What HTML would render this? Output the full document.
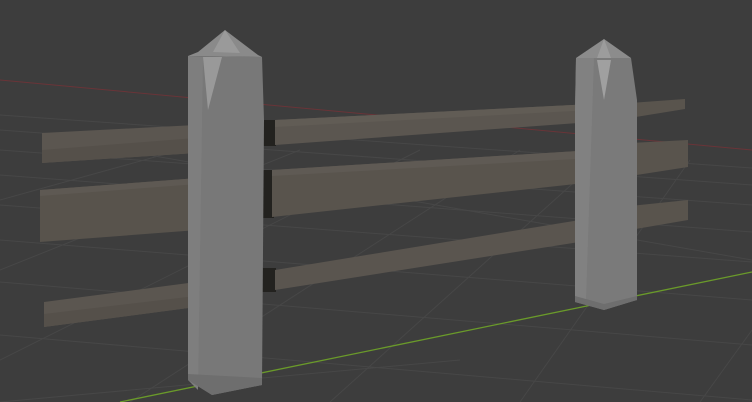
<!DOCTYPE html>
<html><head><style>html,body{margin:0;padding:0;background:#3d3d3d;width:752px;height:402px;overflow:hidden}</style></head>
<body>
<svg width="752" height="402" viewBox="0 0 752 402" xmlns="http://www.w3.org/2000/svg">
<rect width="752" height="402" fill="#3d3d3d"/>
<g stroke="#474747" stroke-width="1" fill="none">
<path d="M0 150 L752 205"/><path d="M0 175 L752 232"/><path d="M0 205 L752 262"/><path d="M0 240 L752 300"/><path d="M0 282 L752 345"/><path d="M0 335 L752 400"/>
<path d="M0 130 L752 185"/><path d="M0 115 L752 168"/>
<path d="M0 270 L300 150"/><path d="M0 360 L420 150"/><path d="M130 402 L520 150"/><path d="M330 402 L610 150"/><path d="M520 402 L690 160"/><path d="M700 402 L752 330"/>
<path d="M0 200 L180 150"/><path d="M0 402 L460 360"/><path d="M120 150 L752 260"/>
</g>
<path d="M0 80 L752 150" stroke="#6a3438" stroke-width="1"/>
<path d="M120 402 L752 272" stroke="#6a9a2a" stroke-width="1.3"/>
<!-- left rails -->
<polygon points="42,133 196,125 196,153 42,163" fill="#5b5650"/>
<polygon points="42,150 196,138 196,153 42,163" fill="#55504a"/>
<polygon points="40,190 198,178 198,230 40,242" fill="#58534c"/>
<polygon points="40,190 198,178 198,184 40,196" fill="#5e5953"/>
<polygon points="44,302 196,282 196,307 44,327" fill="#5b5650"/>
<polygon points="44,314 196,296 196,307 44,327" fill="#55504a"/>
<!-- gaps -->
<rect x="262" y="120" width="14" height="26" fill="#23221f"/>
<rect x="262" y="170" width="12" height="48" fill="#23221f"/>
<rect x="262" y="268" width="14" height="24" fill="#23221f"/>
<!-- middle rails -->
<polygon points="275,120 592,104 592,122 275,145" fill="#5b5650"/>
<polygon points="275,120 592,104 592,110 275,127" fill="#615c55"/>
<polygon points="272,170 594,150 594,182 272,217" fill="#59544d"/>
<polygon points="272,170 594,150 594,158 272,176" fill="#5f5a54"/>
<polygon points="275,270 592,218 592,240 275,290" fill="#5a554f"/>
<polygon points="575,122 592,122 575,135" fill="#2a2926"/>
<polygon points="575,182 594,182 575,196" fill="#2a2926"/>
<polygon points="575,240 592,240 575,250" fill="#2a2926"/>
<!-- right rails -->
<polygon points="630,103 685,99 685,109 630,118" fill="#59544d"/>
<polygon points="630,143 688,140 688,167 630,176" fill="#59544d"/>
<polygon points="630,206 688,200 688,220 630,230" fill="#59544d"/>
<!-- left post -->
<polygon points="188,56 262,57 264,120 262,385 212,395 188,380" fill="#787878"/>
<polygon points="188,56 203,57 198,390 188,380" fill="#7e7e7e"/>
<polygon points="203,57 222,57 208,110" fill="#999"/>
<polygon points="188,374 262,378 262,385 212,395 188,380" fill="#6e6e6e"/>
<polygon points="198,52 225,30 258,55 262,57 188,56" fill="#8a8a8a"/>
<polygon points="213,52 225,30 240,53" fill="#9a9a9a"/>
<!-- right post -->
<polygon points="576,58 631,58 637,100 637,300 604,310 575,302 575,110" fill="#7a7a7a"/>
<polygon points="576,58 594,58 586,300 575,302 575,110" fill="#818181"/>
<polygon points="597,60 611,60 604,100" fill="#a0a0a0"/>
<polygon points="575,296 604,304 637,296 637,300 604,310 575,302" fill="#6e6e6e"/>
<polygon points="576,58 604,39 631,58" fill="#8c8c8c"/>
<polygon points="597,58 604,39 611,58" fill="#9c9c9c"/>
</svg>
</body></html>
